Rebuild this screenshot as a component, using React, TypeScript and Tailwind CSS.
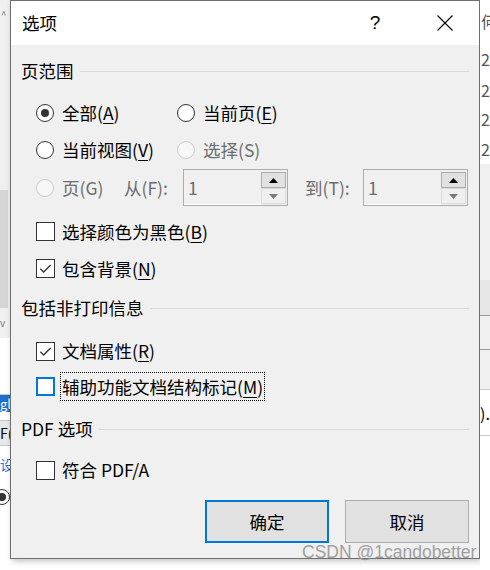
import React from 'react';

const FONT = { fontFamily: '"Noto Sans CJK SC", "Noto Sans", sans-serif' };

const Key: React.FC<{ k: string }> = ({ k }) => (
  <>
    (<span className="underline underline-offset-[3px] decoration-1">{k}</span>)
  </>
);

const Radio: React.FC<{ checked?: boolean; disabled?: boolean }> = ({ checked, disabled }) => (
  <span
    className={
      'flex items-center justify-center w-[18px] h-[18px] rounded-full border shrink-0 ' +
      (disabled ? 'border-[#cccccc] bg-[#f7f7f7]' : 'border-[#333333] bg-white')
    }
  >
    {checked && <span className="w-[8px] h-[8px] rounded-full bg-[#333333]" />}
  </span>
);

const Check: React.FC<{ checked?: boolean; focused?: boolean }> = ({ checked, focused }) => (
  <span
    className={
      'flex items-center justify-center w-[19px] h-[19px] bg-white shrink-0 ' +
      (focused ? 'border-2 border-[#0078d7]' : 'border border-[#333333]')
    }
  >
    {checked && (
      <svg width="15" height="15" viewBox="0 0 16 16">
        <polyline points="2.5,8.2 6,11.7 13.5,4.2" fill="none" stroke="#333" strokeWidth="1.4" />
      </svg>
    )}
  </span>
);

const Header: React.FC<{ label: string; className?: string }> = ({ label, className }) => (
  <div className={'flex items-center h-[30px] gap-[6px] ' + (className || '')}>
    <span className="text-black">{label}</span>
    <span className="flex-1 h-px bg-[#d8d8d8] mt-[1px]" />
  </div>
);

const Spin: React.FC = () => (
  <div className="flex items-stretch w-[105px] h-[37px] border border-[#adadad] bg-[#f0f0f0] shrink-0">
    <span className="flex-1 pl-[4px] text-[#6d6d6d] leading-[35px] border-b border-white">1</span>
    <div className="flex flex-col w-[25px] mr-[1px] mt-[2px] mb-[1px]">
      <div className="flex items-center justify-center h-[16px] bg-[#e1e1e1] border border-[#adadad]">
        <svg width="9" height="5" viewBox="0 0 9 5">
          <polygon points="0,5 9,5 4.5,0" fill="#000" />
        </svg>
      </div>
      <div className="flex items-center justify-center flex-1 bg-[#f0f0f0] border border-[#dcdcdc]">
        <svg width="9" height="5" viewBox="0 0 9 5">
          <polygon points="0,0 9,0 4.5,5" fill="#7a7a7a" />
        </svg>
      </div>
    </div>
  </div>
);

const Row: React.FC<{ children: React.ReactNode; className?: string }> = ({ children, className }) => (
  <div className={'flex items-center pl-[15px] ' + (className || 'gap-[7px]')}>{children}</div>
);

export default function App() {
  return (
    <div className="relative w-[490px] h-[570px] overflow-hidden bg-white flex text-[17.5px] leading-[22px]" style={FONT}>
      {/* background window, left strip */}
      <div className="w-[10px] h-full flex flex-col bg-[#f0f0f0] overflow-hidden text-[14px]">
        <div className="h-[30px] flex items-center justify-start text-[#777] text-[10px] pl-[1px]">^</div>
        <div className="h-[160px]" />
        <div className="h-[118px] w-[8px] bg-[#d6d6d6]" />
        <div className="h-[30px] text-[#777] text-[10px] leading-[30px]">v</div>
        <div className="h-[57px] border-b border-[#c8c8c8] bg-white" />
        <div className="h-[17px] bg-[#1e6fd0] text-white text-[13px] leading-[17px] whitespace-nowrap">gl</div>
        <div className="h-[8px] bg-white" />
        <div className="h-[26px] bg-[#e8e8e8] border-y border-[#c8c8c8] whitespace-nowrap text-[14px] leading-[24px]">F(</div>
        <div className="h-[36px] bg-white text-[#2a6ad1] whitespace-nowrap leading-[36px]">设</div>
        <div className="h-[30px] bg-white flex items-center">
          <span className="w-[16px] h-[16px] -ml-[6px] rounded-full border border-[#333] flex items-center justify-center shrink-0">
            <span className="w-[8px] h-[8px] rounded-full bg-[#333]" />
          </span>
        </div>
        <div className="flex-1 bg-white" />
      </div>

      {/* dialog */}
      <div className="w-[470px] h-[559px] flex flex-col border border-[#6e6e6e] shadow-[2px_2px_6px_rgba(0,0,0,0.25)] bg-[#f0f0f0] shrink-0">
        <div className="h-[44px] bg-white flex items-center pl-[11px] shrink-0">
          <span className="text-black flex-1">选项</span>
          <span className="w-[20px] text-center text-[19px] text-black" style={{ fontFamily: '"Liberation Sans", sans-serif' }}>
            ?
          </span>
          <span className="w-[52px]" />
          <svg width="16" height="16" viewBox="0 0 16 16" className="mr-[26px]">
            <path d="M0.5 0.5 L15.5 15.5 M15.5 0.5 L0.5 15.5" stroke="#000" strokeWidth="1.1" fill="none" />
          </svg>
        </div>

        <div className="flex-1 flex flex-col pt-[11px] pl-[10px] pr-[10px]">
          <Header label="页范围" />

          <Row className="mt-[8px] h-[37px] gap-[8px]">
            <Radio checked />
            <span className="w-[107px] text-black">
              全部<Key k="A" />
            </span>
            <Radio />
            <span className="text-black">
              当前页<Key k="E" />
            </span>
          </Row>
          <Row className="h-[37px] gap-[8px]">
            <Radio />
            <span className="w-[107px] text-black whitespace-nowrap">
              当前视图<Key k="V" />
            </span>
            <Radio disabled />
            <span className="text-[#6d6d6d]">选择(S)</span>
          </Row>
          <Row className="h-[39px] gap-[8px]">
            <Radio disabled />
            <span className="text-[#6d6d6d] w-[54px] shrink-0">页(G)</span>
            <span className="text-[#6d6d6d] w-[51px] shrink-0">从(F):</span>
            <Spin />
            <span className="text-[#6d6d6d] ml-[9px] w-[50px] shrink-0">到(T):</span>
            <Spin />
          </Row>

          <Row className="mt-[6px] h-[37px] gap-[7px]">
            <Check />
            <span className="text-black">
              选择颜色为黑色<Key k="B" />
            </span>
          </Row>
          <Row className="h-[37px] gap-[7px]">
            <Check checked />
            <span className="text-black">
              包含背景<Key k="N" />
            </span>
          </Row>

          <Header label="包括非打印信息" className="mt-[6px]" />

          <Row className="mt-[10px] h-[36px] gap-[7px]">
            <Check checked />
            <span className="text-black">
              文档属性<Key k="R" />
            </span>
          </Row>
          <Row className="h-[35px] gap-[5px]">
            <Check focused />
            <span className="text-black border border-dotted border-black h-[29px] leading-[27px] px-[1px] whitespace-nowrap">
              辅助功能文档结构标记<Key k="M" />
            </span>
          </Row>

          <Header label="PDF 选项" className="mt-[10px]" />

          <Row className="mt-[8px] h-[36px] gap-[7px]">
            <Check />
            <span className="text-black">符合 PDF/A</span>
          </Row>

          <div className="mt-[12px] flex justify-end gap-[16px]">
            <button className="w-[124px] h-[43px] bg-[#e1e1e1] border-2 border-[#0078d7] text-black">确定</button>
            <button className="w-[124px] h-[43px] bg-[#e1e1e1] border border-[#adadad] text-black">取消</button>
          </div>
        </div>
      </div>

      {/* background window, right strip */}
      <div className="flex-1 h-full flex flex-col bg-white overflow-hidden text-[#555] text-[16px] whitespace-nowrap">
        <div className="h-[42px] leading-[42px] pl-[1px]">何</div>
        <div className="h-[34px] leading-[34px] pl-[1px]">2</div>
        <div className="h-[28px] leading-[28px] pl-[1px]">2</div>
        <div className="h-[30px] leading-[30px] pl-[1px]">2</div>
        <div className="h-[30px] leading-[30px] pl-[1px]">2</div>
        <div className="h-[116px] bg-[#f0f0f0]" />
        <div className="h-[36px] bg-[#e6e6e6] border-b border-[#9a9a9a]" />
        <div className="h-[34px] bg-[#f0f0f0] border-b border-[#9a9a9a]" />
        <div className="h-[40px] bg-[#f0f0f0] border-b border-[#c8c8c8]" />
        <div className="h-[46px] border-b border-[#c8c8c8] text-black leading-[46px]">).</div>
        <div className="flex-1" />
      </div>

      {/* watermark */}
      <div
        className="absolute left-[302px] top-[541px] text-[17.5px] leading-[22px] text-[#8c8c8c] opacity-80 whitespace-nowrap"
        style={{ fontFamily: '"Liberation Sans", Arial, sans-serif' }}
      >
        CSDN @1candobetter
      </div>
    </div>
  );
}
